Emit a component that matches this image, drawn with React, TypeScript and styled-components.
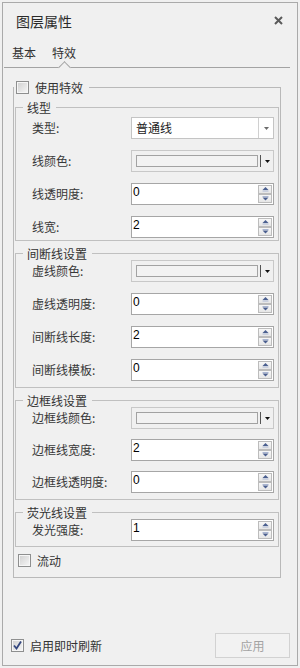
import { Fragment } from 'react';
import styled, { createGlobalStyle } from 'styled-components';

const GlobalStyle = createGlobalStyle`
  html, body {
    margin: 0;
    padding: 0;
    background: #f0f0f0;
  }
  body {
    font-family: "Noto Sans CJK SC", "Noto Sans", sans-serif;
    font-size: 12px;
    color: #333;
  }
  * {
    box-sizing: border-box;
  }
`;

const Panel = styled.div`
  margin: 2px;
  width: 296px;
  height: 664px;
  border: 1px solid #aaaaaa;
  display: flex;
  flex-direction: column;
`;

const Header = styled.div`
  height: 36px;
  display: flex;
  align-items: center;
  justify-content: space-between;
  padding: 0 14px 0 13px;
`;

const Title = styled.div`
  font-size: 14px;
  line-height: 16px;
  color: #2a2a2a;
`;

const CloseButton = styled.button`
  border: 0;
  background: none;
  padding: 0;
  margin-top: -2px;
  width: 9px;
  height: 9px;
  display: flex;
  cursor: pointer;
`;

const TabBar = styled.div`
  height: 29px;
  margin: 0 7px 0 1px;
  padding-left: 8px;
  border-bottom: 1px solid #a3a3a3;
  display: flex;
  gap: 16px;
`;

const Tab = styled.div<{ $active?: boolean }>`
  position: relative;
  display: flex;
  align-items: center;
  font-size: 12px;
  line-height: 14px;
  color: #333;

  ${p => p.$active && `
    &::after {
      content: "";
      position: absolute;
      left: 50%;
      bottom: -5px;
      width: 8px;
      height: 8px;
      margin-left: -4px;
      background: #f0f0f0;
      border-top: 1px solid #a3a3a3;
      border-left: 1px solid #a3a3a3;
      transform: rotate(45deg);
    }
  `}
`;

const Body = styled.div`
  padding: 13px 0 0 10px;
`;

const Group = styled.fieldset<{ $outer?: boolean }>`
  margin: 0;
  padding: 0;
  min-width: 0;
  width: ${p => (p.$outer ? '268px' : 'auto')};
  border: 1px solid ${p => (p.$outer ? '#b9b9b9' : '#c0c0c0')};
`;

const Legend = styled.legend<{ $outer?: boolean }>`
  margin-left: ${p => (p.$outer ? '0' : '7px')};
  padding: ${p => (p.$outer ? '0 6px 0 2px' : '0 5px 0 4px')};
  display: flex;
  align-items: center;
  gap: 6px;
  font-size: 12px;
  line-height: 13px;
  color: #333;
`;

const OuterContent = styled.div`
  padding: 7px 1px 10px;
  display: flex;
  flex-direction: column;
  gap: 6px;
`;

const Fields = styled.div<{ $pt: number; $pb: number; $gap: number }>`
  padding: ${p => p.$pt}px 4px ${p => p.$pb}px 16px;
  display: grid;
  grid-template-columns: 1fr 143px;
  row-gap: ${p => p.$gap}px;
  align-items: center;
`;

const Label = styled.div`
  font-size: 12px;
  line-height: 14px;
  color: #383838;
`;

const ComboBox = styled.div`
  height: 22px;
  display: flex;
  background: #fff;
  border: 1px solid #c4c4c4;
`;

const ComboText = styled.div`
  flex: 1;
  padding-left: 4px;
  font-size: 12px;
  line-height: 20px;
  color: #222;
`;

const ComboArrow = styled.div`
  width: 15px;
  border-left: 1px solid #d0d0d0;
  display: flex;
  align-items: center;
  justify-content: center;
`;

const ColorBox = styled.div`
  height: 22px;
  display: flex;
  align-items: center;
  padding-left: 4px;
  background: #f0f0f0;
  border: 1px solid #c8c8c8;
`;

const Swatch = styled.div`
  flex: 1;
  height: 12px;
  border: 1px solid #a2a2a2;
  background: #f2f2f2;
`;

const ColorDivider = styled.div`
  width: 1px;
  height: 12px;
  margin-left: 2px;
  background: #555;
`;

const ColorArrow = styled.div`
  width: 12px;
  display: flex;
  justify-content: center;
`;

const SpinBox = styled.div`
  height: 22px;
  display: flex;
  padding: 1px 1px 1px 0;
  background: #fff;
  border: 1px solid #a6a6a6;
`;

const SpinValue = styled.div`
  flex: 1;
  padding-left: 1px;
  font-family: "Liberation Sans", "Noto Sans", sans-serif;
  font-size: 12px;
  line-height: 14px;
  color: #000;
`;

const SpinButtons = styled.div`
  width: 14px;
  display: flex;
  flex-direction: column;
`;

const SpinButton = styled.span`
  flex: 1;
  display: flex;
  align-items: center;
  justify-content: center;
  border: 1px solid #bcbcbc;
  background: linear-gradient(#f7f7f7, #e6e6e6);
`;

const CheckRow = styled.label<{ $indent?: number; $top?: number }>`
  display: flex;
  align-items: center;
  gap: 6px;
  margin-left: ${p => p.$indent ?? 0}px;
  margin-top: ${p => p.$top ?? 0}px;
  font-size: 12px;
  line-height: 13px;
  color: #333;
`;

const CheckBox = styled.span`
  width: 13px;
  height: 13px;
  flex: none;
  display: flex;
  align-items: center;
  justify-content: center;
  border: 1px solid #8e8f8f;
  box-shadow: inset 0 0 0 1px #f6f6f6;
  background: linear-gradient(135deg, #cfcfcf, #f7f7f7);
`;

const Footer = styled.div`
  margin-top: auto;
  padding: 0 7px 7px 8px;
  display: flex;
  align-items: center;
  justify-content: space-between;
`;

const ApplyButton = styled.button`
  width: 75px;
  height: 25px;
  padding: 0;
  border: 1px solid #d2d2d2;
  background: #f2f2f2;
  font-family: "Noto Sans CJK SC", sans-serif;
  font-size: 12px;
  color: #a3a3a3;
`;

type Row =
  | { label: string; kind: 'combo'; value: string }
  | { label: string; kind: 'color' }
  | { label: string; kind: 'spin'; value: string };

type Section = { title: string; pt: number; pb: number; gap: number; rows: Row[] };

const sections: Section[] = [
  {
    title: '线型',
    pt: 3,
    pb: 2,
    gap: 11,
    rows: [
      { label: '类型:', kind: 'combo', value: '普通线' },
      { label: '线颜色:', kind: 'color' },
      { label: '线透明度:', kind: 'spin', value: '0' },
      { label: '线宽:', kind: 'spin', value: '2' },
    ],
  },
  {
    title: '间断线设置',
    pt: 0,
    pb: 6,
    gap: 11,
    rows: [
      { label: '虚线颜色:', kind: 'color' },
      { label: '虚线透明度:', kind: 'spin', value: '0' },
      { label: '间断线长度:', kind: 'spin', value: '2' },
      { label: '间断线模板:', kind: 'spin', value: '0' },
    ],
  },
  {
    title: '边框线设置',
    pt: 0,
    pb: 6,
    gap: 10,
    rows: [
      { label: '边框线颜色:', kind: 'color' },
      { label: '边框线宽度:', kind: 'spin', value: '2' },
      { label: '边框线透明度:', kind: 'spin', value: '0' },
    ],
  },
  {
    title: '荧光线设置',
    pt: 0,
    pb: 5,
    gap: 10,
    rows: [{ label: '发光强度:', kind: 'spin', value: '1' }],
  },
];

const Triangle = ({ up, color }: { up?: boolean; color: string }) => (
  <svg width="5" height="3" viewBox="0 0 5 3">
    <path d={up ? 'M0 3 L2.5 0 L5 3 Z' : 'M0 0 L5 0 L2.5 3 Z'} fill={color} />
  </svg>
);

const SpinArrow = ({ up }: { up?: boolean }) => (
  <svg width="7" height="5" viewBox="0 0 7 5">
    {up ? (
      <>
        <path d="M0.5 3 L3.5 0 L6.5 3 Z" fill="#4a5f8f" />
        <rect x="0.5" y="3.5" width="6" height="1" fill="#aab6d2" />
      </>
    ) : (
      <>
        <rect x="0.5" y="0" width="6" height="1" fill="#aab6d2" />
        <path d="M0.5 1.5 L6.5 1.5 L3.5 4.5 Z" fill="#4a5f8f" />
      </>
    )}
  </svg>
);

const Control = ({ row }: { row: Row }) => {
  if (row.kind === 'combo') {
    return (
      <ComboBox>
        <ComboText>{row.value}</ComboText>
        <ComboArrow>
          <Triangle color="#6b6b6b" />
        </ComboArrow>
      </ComboBox>
    );
  }
  if (row.kind === 'color') {
    return (
      <ColorBox>
        <Swatch />
        <ColorDivider />
        <ColorArrow>
          <Triangle color="#111" />
        </ColorArrow>
      </ColorBox>
    );
  }
  return (
    <SpinBox>
      <SpinValue>{row.value}</SpinValue>
      <SpinButtons>
        <SpinButton>
          <SpinArrow up />
        </SpinButton>
        <SpinButton>
          <SpinArrow />
        </SpinButton>
      </SpinButtons>
    </SpinBox>
  );
};

const App = () => {
  return (
    <>
      <GlobalStyle />
      <Panel>
        <Header>
          <Title>图层属性</Title>
          <CloseButton aria-label="关闭">
            <svg width="9" height="9" viewBox="0 0 9 9">
              <path d="M1 1 L8 8 M8 1 L1 8" stroke="#5a5a5a" strokeWidth="2" />
            </svg>
          </CloseButton>
        </Header>

        <TabBar>
          <Tab>基本</Tab>
          <Tab $active>特效</Tab>
        </TabBar>

        <Body>
          <Group $outer>
            <Legend $outer>
              <CheckBox />
              使用特效
            </Legend>
            <OuterContent>
              {sections.map(section => (
                <Group key={section.title}>
                  <Legend>{section.title}</Legend>
                  <Fields $pt={section.pt} $pb={section.pb} $gap={section.gap}>
                    {section.rows.map(row => (
                      <Fragment key={row.label}>
                        <Label>{row.label}</Label>
                        <Control row={row} />
                      </Fragment>
                    ))}
                  </Fields>
                </Group>
              ))}
              <CheckRow $indent={3} $top={1}>
                <CheckBox />
                流动
              </CheckRow>
            </OuterContent>
          </Group>
        </Body>

        <Footer>
          <CheckRow>
            <CheckBox>
              <svg width="9" height="9" viewBox="0 0 9 9">
                <path d="M1 4.5 L3.5 7.5 L8 0.5" stroke="#33467e" strokeWidth="1.8" fill="none" />
              </svg>
            </CheckBox>
            启用即时刷新
          </CheckRow>
          <ApplyButton disabled>应用</ApplyButton>
        </Footer>
      </Panel>
    </>
  );
};

export default App;
